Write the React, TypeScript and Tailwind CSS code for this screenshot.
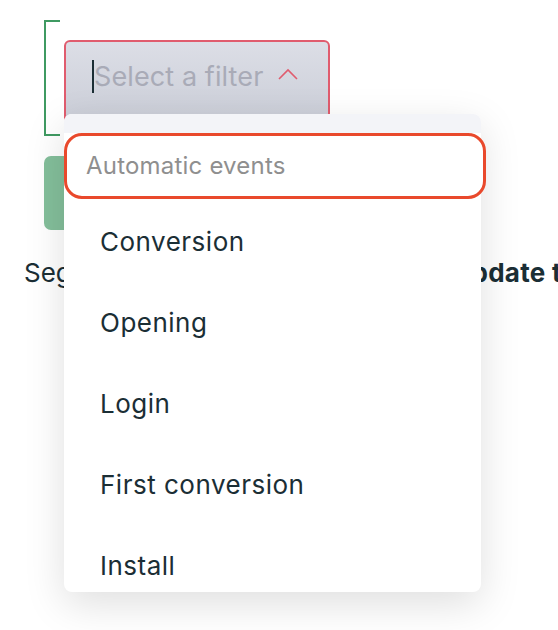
import React from 'react'

const items = ['Conversion', 'Opening', 'Login', 'First conversion', 'Install']

function ChevronUp() {
  return (
    <svg width="20" height="12" viewBox="0 0 20 12" fill="none" className="ml-[15px] mb-[6px]">
      <polyline points="1,11 10,2 19,11" stroke="#e05c6e" strokeWidth="1.6" />
    </svg>
  )
}

export default function App() {
  return (
    <div
      className="relative w-[558px] h-[630px] overflow-hidden bg-white text-[#1b2e35]"
      style={{ fontFamily: 'Inter, "Noto Sans", sans-serif' }}
    >
      {/* filter group bracket */}
      <div className="pt-[20px] pl-[44px]">
        <div className="w-[16px] h-[116px] border-l-2 border-y-2 border-[#3f9a62]">
          <div className="ml-[18px] mt-[18px] w-[266px] h-[84px] rounded-[6px] border-2 border-[#e05c6e] bg-gradient-to-b from-[#dcdee6] to-[#cbced8] flex items-start pt-[17px] pl-[26px]">
            <span className="w-[2px] h-[33px] bg-[#1b2e35] mt-[1px]" />
            <span className="flex items-center">
              <span className="text-[27px] leading-[36px] text-[#a9abb7] tracking-[0.1px]">Select a filter</span>
              <ChevronUp />
            </span>
          </div>
        </div>
      </div>

      {/* add button */}
      <div className="ml-[44px] mt-[20px] w-[220px] h-[74px] rounded-[7px] bg-[#84bf9b]" />

      {/* helper text */}
      <div className="mt-[26px] pl-[24px] flex whitespace-nowrap text-[26px] leading-[34px]">
        <span className="w-[431px] shrink-0">Segments will refresh and</span>
        <span className="font-bold tracking-[0.3px]">update their</span>
      </div>

      {/* dropdown menu */}
      <div className="absolute left-[64px] top-[114px] w-[417px] h-[478px] rounded-[8px] bg-white shadow-[0_12px_40px_rgba(0,0,0,0.13)]">
        <div className="h-full overflow-hidden rounded-[8px]">
          <div className="h-[19px] bg-[#f3f4f8]" />
        </div>
        <div className="absolute left-0 top-[19px] w-[422px] h-[459px] overflow-hidden rounded-b-[8px]">
          <div className="w-[422px] h-[66px] rounded-[18px] border-[3px] border-[#e9492c] bg-white flex items-center pl-[19px]">
            <span className="text-[24px] tracking-[0.2px] text-[#8f8f8f]">Automatic events</span>
          </div>
          <div className="w-[417px] mt-[2px]">
            {items.map((item) => (
              <div key={item} className="h-[81px] flex items-center pl-[36px] text-[26px] tracking-[0.5px]">
                {item}
              </div>
            ))}
          </div>
        </div>
      </div>
    </div>
  )
}
